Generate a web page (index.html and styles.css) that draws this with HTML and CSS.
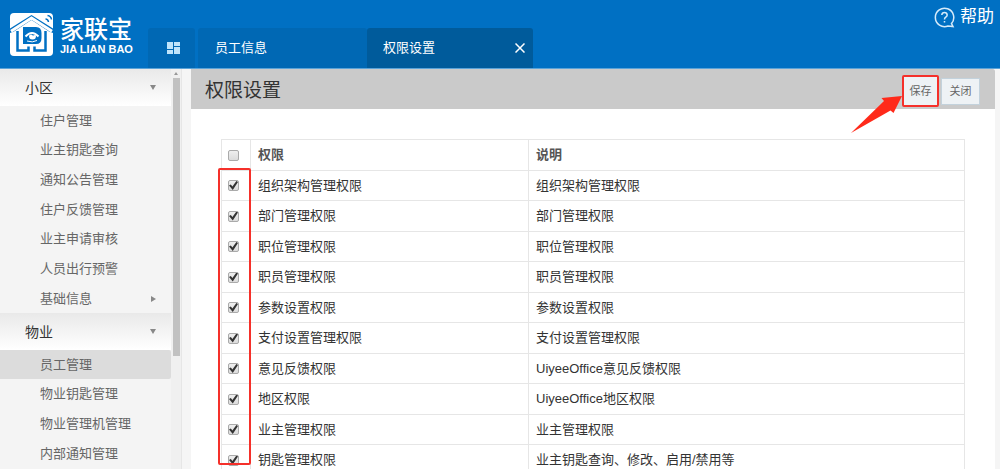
FILE: index.html
```html
<!DOCTYPE html>
<html lang="zh-CN">
<head>
<meta charset="utf-8">
<title>权限设置</title>
<link rel="stylesheet" href="styles.css">
</head>
<body>
<div class="app">
  <header class="topbar">
    <div class="brand">
      <svg class="brand-mark" viewBox="0 0 43 43" aria-hidden="true">
        <rect width="43" height="43" rx="4" fill="#fff"/>
        <path d="M0 15.500 21.500 2 43 15.500V20L39 18.500 21.500 7 4 18.500 0 20Z" fill="#0070c3"/>
        <path d="M1 18.200 21.500 5 42 18.200" fill="none" stroke="#fff" stroke-width="3"/>
        <path d="M7.500 18V37.500H18.500V33.500M35.500 18V37.500H24.500V33.500" fill="none" stroke="#0070c3" stroke-width="2.500"/>
        <path d="M13 14H26Q31.500 14 31.500 20V25Q31.500 31 26 31H13Z" fill="#0070c3"/>
        <path d="M15.500 23.500Q22 16.500 28.500 23.500" fill="none" stroke="#fff" stroke-width="2"/>
        <path d="M19 23a3.500 3.500 0 0 0 7 0q0-1-1-1.500a2 2 0 0 1-3.500 0Q19 21.500 19 23Z" fill="#fff"/>
        <path d="M17 28Q22.500 30 27 27.500" fill="none" stroke="#fff" stroke-width="1"/>
        <path d="M35.500 6q2.500 0 3 3M37.500 2.500q3.500.5 4 4" fill="none" stroke="#0070c3" stroke-width="1.500"/>
      </svg>
      <div class="brand-text">
        <span class="brand-name">家联宝</span>
        <span class="brand-latin">JIA LIAN BAO</span>
      </div>
    </div>
    <nav class="tabs">
      <button class="tab tab-home" aria-label="首页">
        <svg width="13" height="13" viewBox="0 0 13 13" fill="#bfe4fb"><path d="M0 0H6V7H0ZM7 0H13V4H7ZM0 8H6V12H0ZM7 5H13V12H7Z"/></svg>
      </button>
      <button class="tab tab-page">员工信息</button>
      <button class="tab tab-page tab-active">权限设置
        <svg width="10" height="10" viewBox="0 0 10 10" fill="none" stroke="#fff" stroke-width="1.500"><path d="M.5.5 9.500 9.500M9.500.5.5 9.500"/></svg>
      </button>
    </nav>
    <a class="help" href="#">
      <svg width="21" height="21" viewBox="0 0 21 21" fill="none" stroke="#d6ebfa" stroke-width="1.500"><path d="M17.500 16.500A9.200 9.200 0 1 0 14 19L19 19.500Z"/><path d="M7.800 8q.2-2.500 2.700-2.500T13.200 8q0 1.200-1.400 2.200T10.500 12.500M10.500 14V15.500"/></svg>
      帮助
    </a>
  </header>
  <div class="body">
    <aside class="sidebar">
      <nav class="menu">
        <button class="menu-head">小区<span class="caret caret-down"></span></button>
        <ul class="menu-list">
          <li><a href="#">住户管理</a></li>
          <li><a href="#">业主钥匙查询</a></li>
          <li><a href="#">通知公告管理</a></li>
          <li><a href="#">住户反馈管理</a></li>
          <li><a href="#">业主申请审核</a></li>
          <li><a href="#">人员出行预警</a></li>
          <li><a href="#">基础信息<span class="caret caret-right"></span></a></li>
        </ul>
        <button class="menu-head">物业<span class="caret caret-down"></span></button>
        <ul class="menu-list">
          <li><a class="current" href="#">员工管理</a></li>
          <li><a href="#">物业钥匙管理</a></li>
          <li><a href="#">物业管理机管理</a></li>
          <li><a href="#">内部通知管理</a></li>
        </ul>
      </nav>
      <div class="scroll"><span class="scroll-up"></span><span class="scroll-thumb"></span></div>
    </aside>
    <main class="panel">
      <div class="panel-head">
        <h1>权限设置</h1>
        <div class="actions">
          <div class="marked">
            <button class="btn">保存</button>
            <svg class="arrow" width="52" height="38" viewBox="0 0 52 38" fill="#ff2a1a"><path d="M0 37 33 5 30.500 2 51 0 42.500 17 39.500 14.500Z"/></svg>
          </div>
          <button class="btn">关闭</button>
        </div>
      </div>
      <div class="table-wrap">
        <table class="grid">
          <thead>
            <tr><th class="pick"><input type="checkbox" aria-label="全选"></th><th class="name">权限</th><th>说明</th></tr>
          </thead>
          <tbody>
            <tr><td class="pick"><input type="checkbox" aria-label="组织架构管理权限" checked></td><td>组织架构管理权限</td><td>组织架构管理权限</td></tr>
            <tr><td class="pick"><input type="checkbox" aria-label="部门管理权限" checked></td><td>部门管理权限</td><td>部门管理权限</td></tr>
            <tr><td class="pick"><input type="checkbox" aria-label="职位管理权限" checked></td><td>职位管理权限</td><td>职位管理权限</td></tr>
            <tr><td class="pick"><input type="checkbox" aria-label="职员管理权限" checked></td><td>职员管理权限</td><td>职员管理权限</td></tr>
            <tr><td class="pick"><input type="checkbox" aria-label="参数设置权限" checked></td><td>参数设置权限</td><td>参数设置权限</td></tr>
            <tr><td class="pick"><input type="checkbox" aria-label="支付设置管理权限" checked></td><td>支付设置管理权限</td><td>支付设置管理权限</td></tr>
            <tr><td class="pick"><input type="checkbox" aria-label="意见反馈权限" checked></td><td>意见反馈权限</td><td>UiyeeOffice意见反馈权限</td></tr>
            <tr><td class="pick"><input type="checkbox" aria-label="地区权限" checked></td><td>地区权限</td><td>UiyeeOffice地区权限</td></tr>
            <tr><td class="pick"><input type="checkbox" aria-label="业主管理权限" checked></td><td>业主管理权限</td><td>业主管理权限</td></tr>
            <tr><td class="pick"><input type="checkbox" aria-label="钥匙管理权限" checked></td><td>钥匙管理权限</td><td>业主钥匙查询、修改、启用/禁用等</td></tr>
          </tbody>
        </table>
        <div class="column-mark"></div>
      </div>
    </main>
  </div>
</div>
</body>
</html>
```
FILE: styles.css
```css
* { box-sizing: border-box; }

body {
  margin: 0;
  font: 13px/20px "Liberation Sans", "Noto Sans CJK SC", sans-serif;
  color: #333;
  background: #f5f5f5;
}

button {
  border: 0;
  margin: 0;
  padding: 0;
  font: inherit;
  color: inherit;
  background: none;
}

a { color: inherit; text-decoration: none; }

.app {
  display: flex;
  flex-direction: column;
  height: 100vh;
  overflow: hidden;
}

/* Top bar */
.topbar {
  display: flex;
  flex: none;
  height: 69px;
  background: #0070c3;
  border-bottom: 1px solid #5ba3d8;
  color: #fff;
}

.brand {
  display: flex;
  gap: 7px;
  width: 148px;
  padding: 13px 0 0 10px;
}

.brand-mark { width: 43px; height: 43px; }

.brand-text { display: flex; flex-direction: column; padding-top: 4px; white-space: nowrap; }
.brand-name { font-size: 24px; line-height: 26px; font-weight: 500; }
.brand-latin { font-size: 11px; line-height: 12px; font-weight: 700; }

.tabs { display: flex; align-items: flex-end; flex: 1; }

.tab {
  display: flex;
  align-items: center;
  height: 40px;
  border-radius: 3px 3px 0 0;
  background: #0068b4;
}

.tab-home { justify-content: center; width: 47px; margin-right: 3px; padding-left: 3px; }

.tab-page {
  justify-content: space-between;
  width: 169px;
  padding: 0 8px 0 17px;
}

.tab-active { width: 166px; padding-left: 16px; background: #005b9b; }

.help {
  display: flex;
  align-items: center;
  gap: 5px;
  height: 34px;
  padding-right: 6px;
  font-size: 17px;
}

/* Sidebar */
.body { display: flex; flex: 1; min-height: 0; }

.sidebar {
  display: flex;
  flex: none;
  width: 182px;
  margin-right: 9px;
  border-right: 1px solid #e6e6e6;
  background: #f4f4f4;
}

.menu { flex: 1; overflow: hidden; }

.menu-head {
  display: flex;
  align-items: center;
  justify-content: space-between;
  width: 100%;
  height: 37px;
  padding: 0 15px 0 25px;
  font-size: 14px;
  background: linear-gradient(#e9e9e9, #fff);
}

.menu-list { margin: 0; padding: 0; list-style: none; color: #666; }

.menu-list a {
  display: flex;
  align-items: center;
  justify-content: space-between;
  height: 30px;
  padding: 0 15px 0 40px;
}

.menu-list li:nth-child(3n + 1) a { height: 29px; }
.menu-list .current { background: #dcdcdc; border-radius: 0 2px 2px 0; }

.caret { border: 3px solid transparent; }
.caret-down { border-top: 5px solid #888; border-bottom: 0; }
.caret-right { border-left: 5px solid #888; border-right: 0; }

.scroll {
  display: flex;
  flex-direction: column;
  align-items: center;
  gap: 3px;
  width: 10px;
  padding-top: 3px;
  background: #f0f0f0;
}

.scroll-up { border: 2px solid transparent; border-top: 0; border-bottom: 3px solid #999; }
.scroll-thumb { width: 7px; height: 70%; background: #c1c1c1; }

/* Content */
.panel { flex: 1; min-width: 0; margin-right: 5px; background: #fff; }

.panel-head {
  display: flex;
  align-items: center;
  justify-content: space-between;
  height: 40px;
  padding: 4px 15px 0 14px;
  background: #cacaca;
  border-radius: 0 2px 0 0;
}

.panel-head h1 { margin: 0; font-size: 19px; line-height: 28px; font-weight: 400; }

.actions { display: flex; align-items: center; gap: 2px; }

.btn {
  width: 39px;
  height: 27px;
  border: 1px solid #c3d2dc;
  background: #eef2f5;
  font-size: 11px;
  color: #666;
}

.marked { position: relative; border: 2px solid #f5302a; border-radius: 2px; }
.marked .btn { display: block; width: 33px; height: 28px; border: 0; }

.arrow { position: absolute; right: 34px; top: 19px; }

.table-wrap { position: relative; margin: 30px; }

.grid { width: 100%; border-collapse: collapse; table-layout: fixed; }

.grid th, .grid td {
  height: 31px;
  padding: 0 7px;
  border: 1px solid #e6e6e6;
  text-align: left;
  font-weight: 400;
}

.grid th { color: #555; font-weight: 700; }
.grid tbody tr:nth-child(odd) td { height: 30px; }
.grid .pick { width: 29px; padding: 0; text-align: center; }
.grid .name { width: 278px; }

.grid input {
  position: relative;
  appearance: none;
  display: block;
  width: 11px;
  height: 11px;
  margin: 0 auto 0 6px;
  border: 1px solid #aaa;
  border-radius: 2px;
  background: linear-gradient(#efefef, #dcdcdc);
}

.grid input:checked::after {
  content: "";
  position: absolute;
  inset: 0;
  background: #333;
  clip-path: polygon(0 50%, 20% 38%, 38% 60%, 82% 0, 100% 12%, 42% 100%);
}

.column-mark {
  position: absolute;
  left: -3px;
  top: 29px;
  width: 33px;
  height: 297px;
  border: 2px solid #f5302a;
  border-radius: 2px;
}
```
